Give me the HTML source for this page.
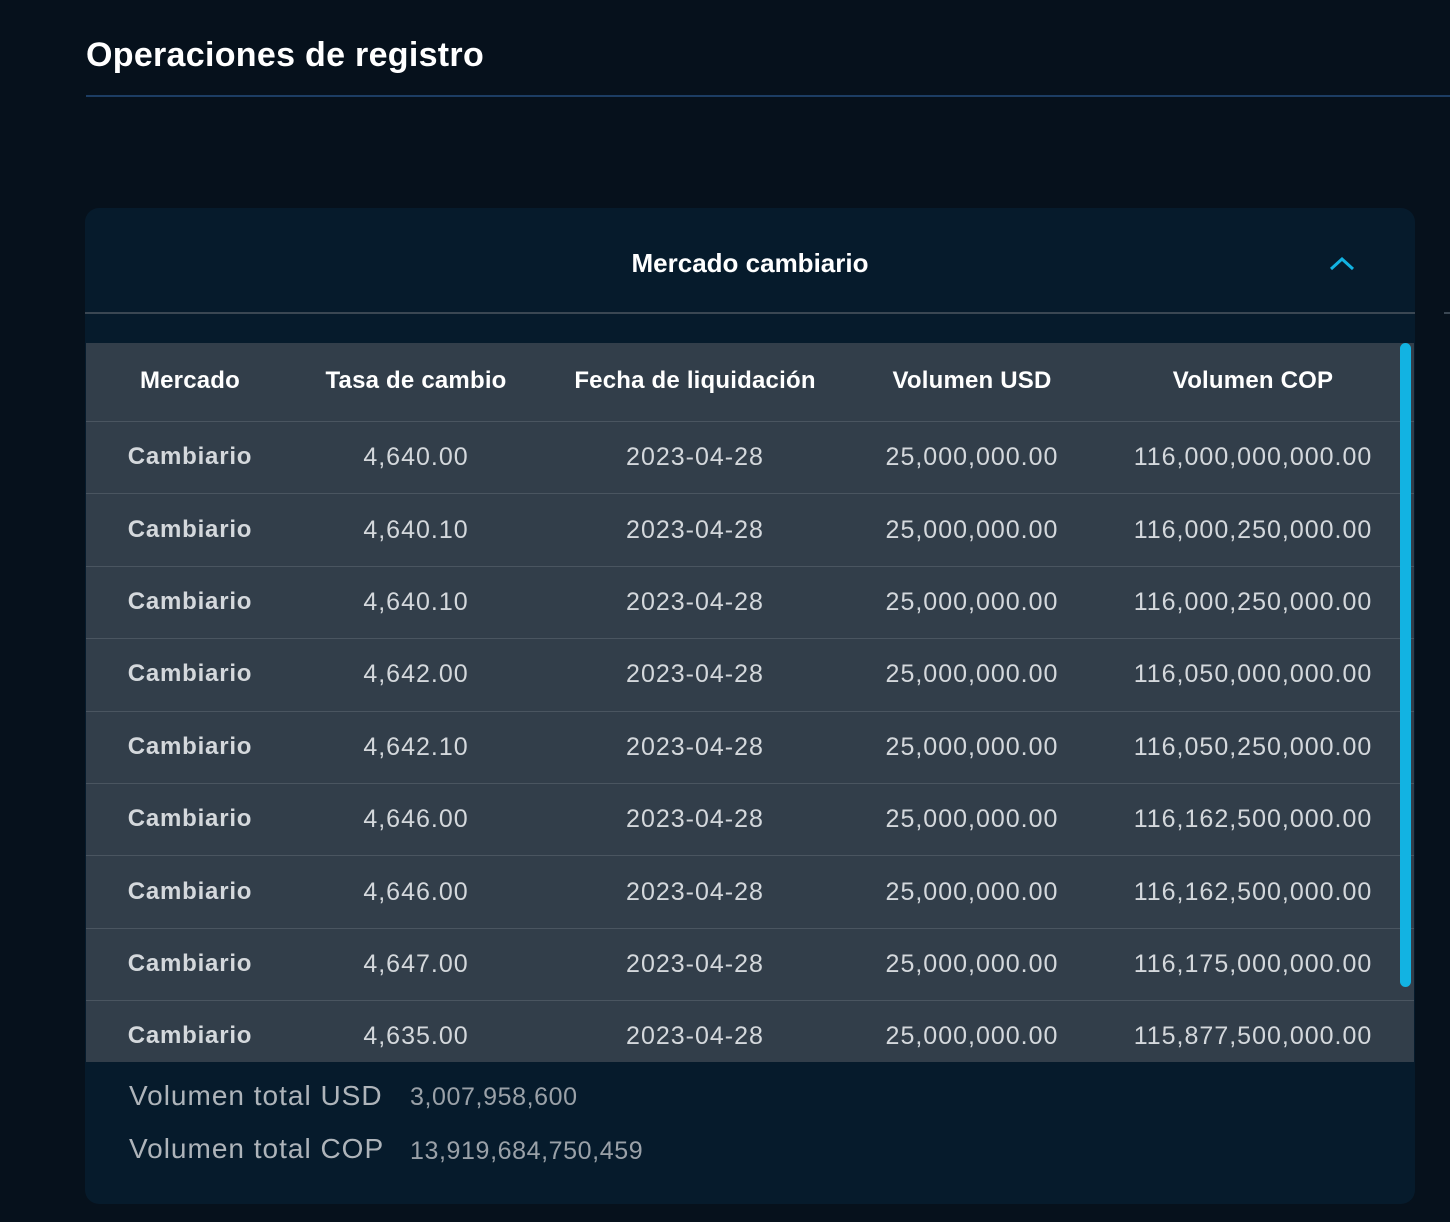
<!DOCTYPE html>
<html><head><style>
body{margin:0;width:1450px;height:1222px;background:#06111c;font-family:"Liberation Sans",sans-serif;position:relative;overflow:hidden}
h1{position:absolute;left:86px;top:36px;margin:0;font-size:34px;font-weight:bold;color:#fff;letter-spacing:0.3px}
.hl{position:absolute;left:86px;top:95px;width:1364px;height:2px;background:#1c3d63}
.card{position:absolute;left:85px;top:208px;width:1330px;height:996px;background:#061b2c;border-radius:14px;overflow:hidden}
.ct{position:absolute;top:248px;left:85px;width:1330px;text-align:center;color:#fff;font-size:26px;font-weight:bold}
.sep{position:absolute;left:85px;top:312px;width:1330px;height:2px;background:#3a4753}
.side{position:absolute;left:1444px;top:312px;width:6px;height:2px;background:#3a4753}
.tbl{position:absolute;left:86px;top:343px;width:1328px;height:719px;background:#323e4a;overflow:hidden}
.row{position:absolute;left:0;width:1328px;border-top:1px solid #4a5560}
.c{position:absolute;text-align:center;font-size:25px;color:#d4d8dc;letter-spacing:1px}
.h .c{color:#fff;font-weight:bold;font-size:24px;letter-spacing:0.2px}
.sb{position:absolute;left:1400px;top:343px;width:11px;height:644px;background:#12b3e2;border-radius:6px}
.tot{position:absolute;left:129px;font-size:28px;color:#aeb4ba;letter-spacing:1px}
.tv{position:absolute;left:410px;font-size:25px;color:#9aa1a8;letter-spacing:0.6px}
</style></head><body>
<h1>Operaciones de registro</h1>
<div class="hl"></div>
<div class="card"></div>
<div class="ct">Mercado cambiario</div>
<svg style="position:absolute;left:1328px;top:253px" width="28" height="20"><path d="M3 16 L14 6 L25 16" stroke="#12b3e2" stroke-width="3" fill="none"/></svg>
<div class="sep"></div><div class="side"></div>
<div class="tbl" id="t"></div>
<div class="sb"></div>
<div class="tot" style="top:1080px">Volumen total USD</div><div class="tv" style="top:1083px">3,007,958,600</div>
<div class="tot" style="top:1133px">Volumen total COP</div><div class="tv" style="top:1137px">13,919,684,750,459</div>
<script>
var t=document.getElementById('t');
var cx=[104,330,609,886,1167];var w=[240,260,320,280,340];
function row(top,h,vals,cls,border){var d=document.createElement('div');d.className='row '+cls;d.style.top=top+'px';d.style.height=h+'px';if(!border)d.style.borderTop='none';
vals.forEach(function(v,i){var c=document.createElement('div');c.className='c';c.style.left=(cx[i]-w[i]/2)+'px';c.style.width=w[i]+'px';c.style.top=(h/2-15)+'px';c.textContent=v;if(i==0&&cls!='h'){c.style.fontWeight='bold';c.style.fontSize='24px';c.style.letterSpacing='0.8px'}d.appendChild(c)});t.appendChild(d)}
row(0,78,['Mercado','Tasa de cambio','Fecha de liquidación','Volumen USD','Volumen COP'],'h',false);
var r=[['4,640.00','116,000,000,000.00'],['4,640.10','116,000,250,000.00'],['4,640.10','116,000,250,000.00'],['4,642.00','116,050,000,000.00'],['4,642.10','116,050,250,000.00'],['4,646.00','116,162,500,000.00'],['4,646.00','116,162,500,000.00'],['4,647.00','116,175,000,000.00'],['4,635.00','115,877,500,000.00']];
r.forEach(function(x,i){row(78+i*72.4,72.4,['Cambiario',x[0],'2023-04-28','25,000,000.00',x[1]],'',true)});
</script>
</body></html>
